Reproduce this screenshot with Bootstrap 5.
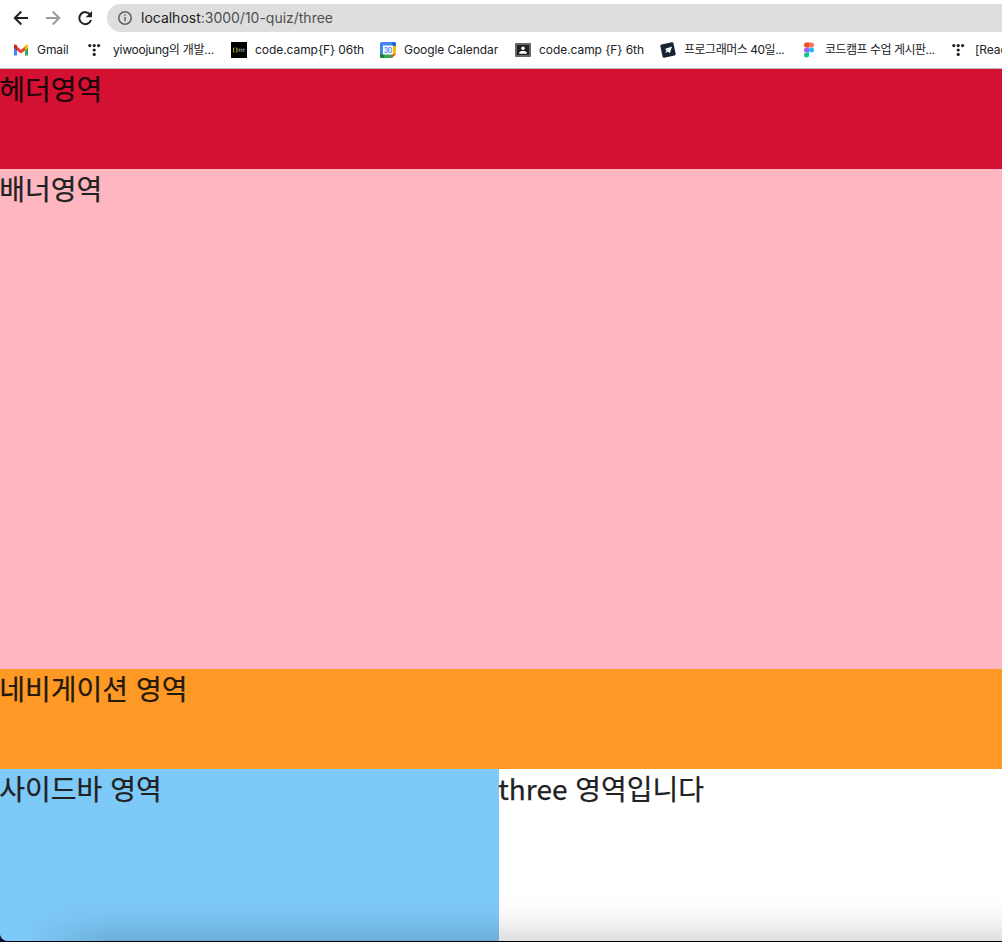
<!DOCTYPE html>
<html lang="ko">
<head>
<meta charset="utf-8">
<title>three</title>
<link href="https://cdn.jsdelivr.net/npm/bootstrap@5.3.0/dist/css/bootstrap.min.css" rel="stylesheet">
<style>
html,body{height:942px;overflow:hidden}
body{font-family:"Noto Sans CJK KR",sans-serif;color:#212121;background:#fff}
.toolbar-row{height:36px}
.address{height:28px;margin-left:14px;border-radius:14px 0 0 14px;background:#dedede;font:14px/28px Inter,"Noto Sans CJK KR",sans-serif;letter-spacing:-.01px;color:#505154}
.address b{font-weight:400;color:#202124}
.bookmark-row{height:32px;padding-left:13px;display:grid;grid-template-columns:76px 142px 149px 135px 145px 141px 150px 51px;align-items:center;font:12px/28px Inter,"Noto Sans CJK KR",sans-serif;letter-spacing:-.06px;color:#202124;padding-bottom:4px}
.bookmark-row svg{overflow:visible;flex-shrink:0}
.edge{height:1px;background:#bdbdbd}
.area{font-size:28px;line-height:39px;text-indent:-.7px;-webkit-text-stroke:.25px}
.head-area{height:100px;background:#d51133;color:#20060a}
.banner-area{height:500px;background:#feb6c1}
.nav-area{height:100px;background:#ff9926;color:#241a0c}
.body-area{height:172px}
.side-area{width:499px;background:#7dc9f8}
.dock-shade{left:0;right:0;bottom:1px;height:42px;background:linear-gradient(transparent,rgba(0,0,0,.03) 45%,rgba(0,0,0,.13));-webkit-mask-image:linear-gradient(90deg,transparent 25px,#000 110px)}
.frame-line{height:1px;background:#000}
.corner{left:0;bottom:0}
</style>
</head>
<body class="position-relative">
<header>
  <div class="toolbar-row d-flex align-items-center">
    <svg width="93" height="36" fill="none" stroke="#202124" stroke-width="2">
      <path d="M28 18H15M21.3 11.5 14.8 18l6.5 6.5"/>
      <path stroke="#9b9b9b" d="M46 18h13M52.7 11.5l6.5 6.5-6.5 6.5"/>
      <path d="M90.3 14.8A6 6 0 1 0 91 20"/><path fill="#202124" stroke="none" d="M92 11v6.3h-6.3z"/>
    </svg>
    <div class="address flex-grow-1 d-flex align-items-center">
      <svg class="ms-2 me-2" width="18" height="18" fill="none" stroke="#5f6368" stroke-width="1.5"><circle cx="10" cy="9" r="6.2"/><path d="M10 8v4.3M10 5.3v1.5"/></svg>
      <span><b>localhost</b>:3000/10-quiz/three</span>
    </div>
  </div>
  <nav class="bookmark-row text-nowrap">
    <div class="d-flex align-items-center gap-2"><svg width="16" height="16"><path fill="#4285f4" d="M1 4v9.5h3V6z"/><path fill="#34a853" d="M12 6v7.5h3V4z"/><path fill="#ea4335" d="M4 4.6 8 7.8l4-3.2v3.8l-4 3.1-4-3.1z"/><path fill="#c5221f" d="M1 4c0-1.8 1.8-1.8 3-.6v5L1 6z"/><path fill="#fbbc04" d="M15 4c0-1.8-1.8-1.8-3-.6v5L15 6z"/></svg><span>Gmail</span></div>
    <div class="d-flex align-items-center gap-2"><svg width="16" height="16" fill="#202124"><g id="dots"><circle cx=".8" cy="3.6" r="1.6"/><circle cx="5.2" cy="3.6" r="1.6"/><circle cx="9.6" cy="3.6" r="1.6"/><circle cx="5.2" cy="8" r="1.6"/><circle cx="5.2" cy="12.4" r="1.6"/></g></svg><span style="letter-spacing:-.25px">yiwoojung의 개발...</span></div>
    <div class="d-flex align-items-center gap-2"><svg width="16" height="16"><path d="M0 0h16v16H0z"/><path fill="none" stroke="#b5a51b" d="M3.5 6h-1v4h1M5 6h1v4H5"/><path fill="none" stroke="#aaa" stroke-dasharray="1.5 .5" d="M7.5 7.3H14M7.5 9H14"/></svg><span>code.camp{F} 06th</span></div>
    <div class="d-flex align-items-center gap-2"><svg width="16" height="16"><path fill="#4285f4" d="M1.5 0H12v4H4v8H0V1.5Q0 0 1.5 0z"/><path fill="#1967d2" d="M12 0h2.5Q16 0 16 1.5V4h-4z"/><path fill="#fbbc04" d="M12 4h4v8h-4z"/><path fill="#34a853" d="M4 12h8v4H4z"/><path fill="#188038" d="M0 12h4v4H1.5Q0 16 0 14.5z"/><path fill="#ea4335" d="M12 12h4l-4 4z"/><path fill="#fff" d="M3 3.5h10v9H3z"/><text x="7.9" y="10.6" text-anchor="middle" font-size="7" font-weight="600" letter-spacing="-.3" fill="#4285f4">30</text></svg><span>Google Calendar</span></div>
    <div class="d-flex align-items-center gap-2"><svg width="16" height="16"><rect y="1" width="16" height="14" rx="1" fill="#666"/><path fill="#202124" d="M2 3h12v10H2z"/><circle cx="8" cy="6.2" r="1.8" fill="#fff"/><path fill="#fff" d="M4.2 11.7V11c0-2.6 7.6-2.6 7.6 0v.7z"/></svg><span>code.camp {F} 6th</span></div>
    <div class="d-flex align-items-center gap-2"><svg width="16" height="16"><rect x="1.3" y="1.3" width="13.4" height="13.4" rx="1.4" fill="#172334" transform="rotate(-12 8 8)"/><path fill="#fff" d="m12 4.5-2.2 6.8L8 9.5 5.3 11l1.2-3-1.7-1z"/></svg><span style="letter-spacing:-.48px">프로그래머스 40일...</span></div>
    <div class="d-flex align-items-center gap-2"><svg width="16" height="16"><path fill="#f24e1e" d="M8 .5H5.5a2.5 2.5 0 0 0 0 5H8z"/><path fill="#ff7262" d="M8 .5h2.5a2.5 2.5 0 0 1 0 5H8z"/><path fill="#a259ff" d="M8 5.5H5.5a2.5 2.5 0 0 0 0 5H8z"/><circle cx="10.5" cy="8" r="2.5" fill="#1abcfe"/><path fill="#0acf83" d="M8 10.5H5.5A2.5 2.5 0 1 0 8 13z"/></svg><span style="letter-spacing:-.5px">코드캠프 수업 게시판...</span></div>
    <div class="d-flex align-items-center gap-2 overflow-hidden"><svg width="16" height="16" fill="#202124"><use href="#dots" x="2"/></svg><span>[Reac</span></div>
  </nav>
  <div class="edge"></div>
</header>
<main class="area">
  <div class="head-area">헤더영역</div>
  <div class="banner-area">배너영역</div>
  <div class="nav-area">네비게이션 영역</div>
  <div class="body-area d-flex">
    <div class="side-area">사이드바 영역</div>
    <div class="flex-grow-1">three 영역입니다</div>
  </div>
</main>
<div class="frame-line"></div>
<div class="dock-shade position-absolute"></div>
<svg class="corner position-absolute" width="10" height="8"><path fill="#160b2c" d="M0 1q2 6 8 6h2v1H0z"/></svg>
<script src="https://cdn.jsdelivr.net/npm/bootstrap@5.3.0/dist/js/bootstrap.bundle.min.js"></script>
</body>
</html>
